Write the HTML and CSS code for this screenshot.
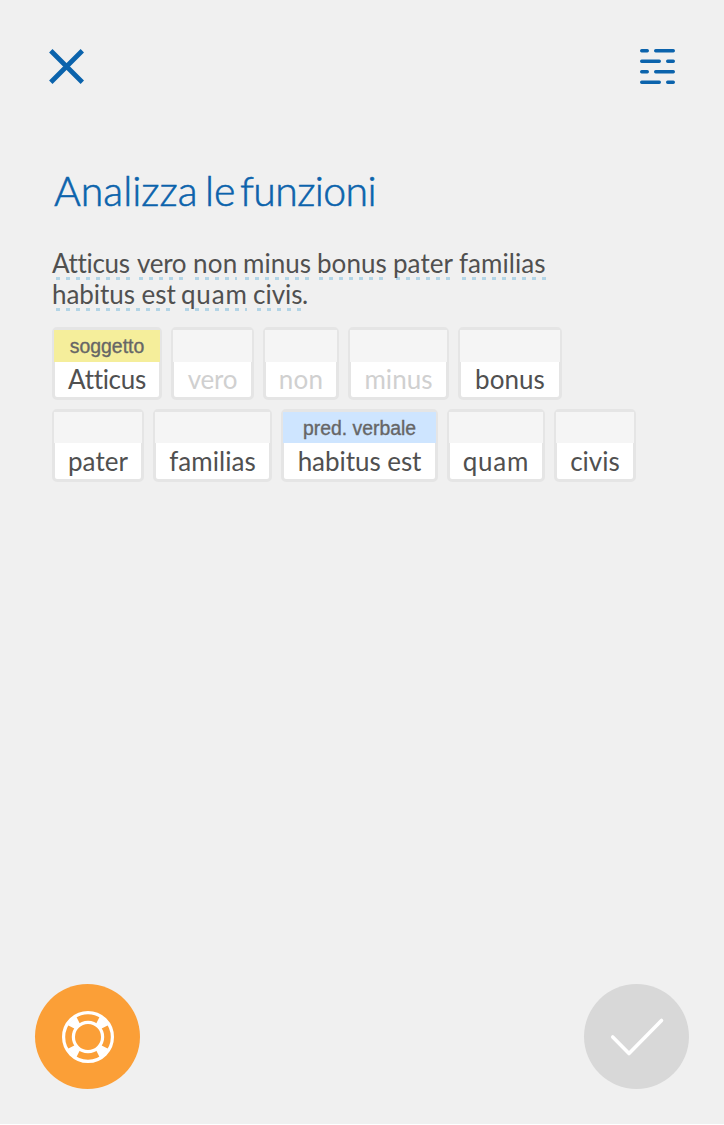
FILE: index.html
```
<!DOCTYPE html>
<html lang="it">
<head>
<meta charset="utf-8">
<title>Analizza le funzioni</title>
<link rel="stylesheet" href="styles.css">
</head>
<body>
<div class="screen">
  <header class="topbar">
    <svg class="icon-close" viewBox="0 0 36 36"><path d="M1.8 1.8 33.3 33.3M33.3 1.8 1.8 33.3"/></svg>
    <svg class="icon-list" viewBox="0 0 36 36">
      <path d="M1.7 1.7H7.3M15.7 1.7H33.3M1.7 12.2H19.3M27.7 12.2H33.3M1.7 22.7H7.3M15.7 22.7H33.3M1.7 33.2H19.3M27.7 33.2H33.3"/>
    </svg>
  </header>
  <main class="content">
    <h1 class="title"><span class="t-analizza">Analizza</span> <span class="t-le">le</span> <span class="t-funzioni">funzioni</span></h1>
    <div class="sentence">
      <p class="line"><span class="word atticus">Atticus</span> <span class="word vero">vero</span> <span class="word non">non</span> <span class="word minus">minus</span> <span class="word bonus">bonus</span> <span class="word pater">pater</span> <span class="word familias">familias</span></p>
      <p class="line"><span class="word habitus">habitus est</span> <span class="word quam">quam</span> <span class="word civis">civis</span><span>.</span></p>
    </div>
    <div class="tiles">
      <div class="tile atticus"><div class="label yellow">soggetto</div><div class="name">Atticus</div></div>
      <div class="tile vero off"><div class="label"></div><div class="name">vero</div></div>
      <div class="tile non off"><div class="label"></div><div class="name">non</div></div>
      <div class="tile minus off"><div class="label"></div><div class="name">minus</div></div>
      <div class="tile bonus"><div class="label"></div><div class="name">bonus</div></div>
    </div>
    <div class="tiles second">
      <div class="tile pater"><div class="label"></div><div class="name">pater</div></div>
      <div class="tile familias"><div class="label"></div><div class="name">familias</div></div>
      <div class="tile habitus"><div class="label blue">pred. verbale</div><div class="name">habitus est</div></div>
      <div class="tile quam"><div class="label"></div><div class="name">quam</div></div>
      <div class="tile civis"><div class="label"></div><div class="name">civis</div></div>
    </div>
  </main>
  <footer class="actions">
    <div class="round help">
      <svg viewBox="0 0 105 105">
        <circle cx="53" cy="53" r="24.4"/>
        <circle cx="53" cy="53" r="14.6"/>
        <g class="spokes">
          <path id="spoke" d="M49.8 39 46.8 30H59.2L56.2 39Z" transform="rotate(45 53 53)"/>
          <use href="#spoke" transform="rotate(90 53 53)"/>
          <use href="#spoke" transform="rotate(180 53 53)"/>
          <use href="#spoke" transform="rotate(270 53 53)"/>
        </g>
      </svg>
    </div>
    <div class="round confirm">
      <svg viewBox="0 0 105 105"><path d="M28.7 53 45 69.5 77.5 36.5"/></svg>
    </div>
  </footer>
</div>
</body>
</html>
```
FILE: styles.css
```
* { box-sizing: border-box; }
body { margin: 0; background: #fff; font-family: Lato, sans-serif; color: #505050; }
.screen { height: 1124px; background: #f0f0f0; display: flex; flex-direction: column; }
svg { display: block; fill: none; }

.topbar { display: flex; justify-content: space-between; padding: 49px 48px 0 49px; height: 168px; }
.topbar svg { width: 36px; height: 36px; stroke: #0b63ac; }
.icon-close { stroke-width: 4.8; }
.icon-list { stroke-width: 3.4; stroke-linecap: round; }

.content { flex: 1; padding-left: 52px; }
.title { margin: 0; display: flex; height: 81px; padding-left: 2px; font-weight: 300; font-size: 41px; line-height: 45px; color: #0b63ac; -webkit-text-stroke: 0.6px #0b63ac; font-variant-ligatures: none; white-space: nowrap; }
.t-analizza { width: 151px; letter-spacing: 0; }
.t-le { width: 35px; }
.t-funzioni { letter-spacing: -0.6px; }

.sentence { height: 78px; font-size: 26px; line-height: 28px; font-variant-ligatures: none; }
.line { margin: 0; height: 31px; display: flex; white-space: nowrap; }
.word { height: 31px; margin-right: 6px; background: repeating-linear-gradient(90deg, #b2d4e6 0 4px, transparent 4px 10px) 4px 28px / 100% 3px no-repeat; }
.word.atticus { width: 79px; }
.word.vero { width: 50px; background-position-x: 2px; }
.word.non { width: 44px; background-position-x: 2px; }
.word.minus { width: 68px; background-position-x: 2px; }
.word.bonus { width: 70px; background-position-x: 2px; }
.word.pater { width: 60px; background-position-x: 3px; }
.word.familias { width: 87px; background-position-x: 3px; }
.word.habitus { width: 123px; }
.word.quam { width: 66px; background-position-x: 4px; }
.word.civis { width: 49px; margin-right: 0; background-position-x: 4px; }

.atticus { letter-spacing: -0.3px; }
.vero { letter-spacing: -0.3px; }
.non { letter-spacing: 0.3px; }
.minus, .bonus, .pater, .familias { letter-spacing: 0.05px; }
.habitus { letter-spacing: -0.05px; }
.quam { letter-spacing: 0.8px; }
.civis { letter-spacing: 0; }

.tiles { display: flex; gap: 9px; height: 82px; font-variant-ligatures: none; }
.tile { height: 73px; border: 3px solid #e5e5e5; border-radius: 5px; background: #fff; text-align: center; }
.label { height: 32px; margin: 0 -1px; background: #f5f5f5; font: 19.4px/33px "Liberation Sans", sans-serif; letter-spacing: 0; color: #666; -webkit-text-stroke: 0.35px #666; }
.second .label { height: 31px; }
.label.yellow { background: #f5ee9b; }
.label.blue { background: #cee5ff; }
.name { font-size: 26px; line-height: 34px; }
.second .name { line-height: 36px; }
.off .name { color: #d0d0d0; }
.tile.atticus { width: 110px; }
.tile.vero { width: 83px; }
.tile.non { width: 76px; }
.tile.minus { width: 101px; }
.tile.bonus { width: 104px; }
.tile.pater { width: 92px; }
.tile.familias { width: 119px; }
.tile.habitus { width: 157px; }
.tile.quam { width: 98px; }
.tile.civis { width: 82px; }

.actions { display: flex; justify-content: space-between; padding: 0 35px 35px; }
.round { width: 105px; height: 105px; border-radius: 50%; }
.round svg { width: 105px; height: 105px; stroke: #fff; stroke-width: 3.2; }
.help { background: #fb9f37; }
.confirm { background: #d8d8d8; }
.confirm svg { stroke-width: 3.6; stroke-linecap: round; stroke-linejoin: round; }
.spokes { fill: #fff; stroke: none; }
```
